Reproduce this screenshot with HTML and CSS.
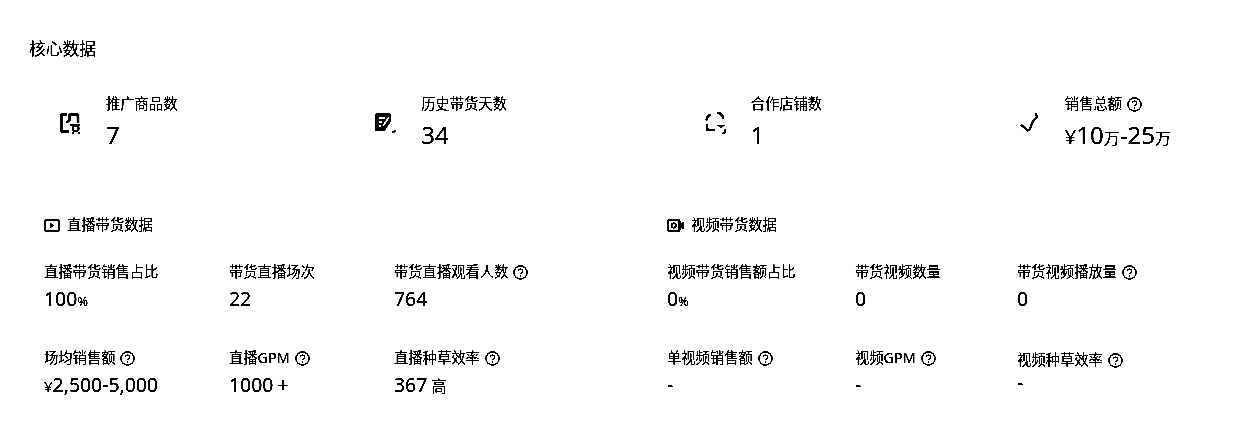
FILE: index.html
```html
<!DOCTYPE html>
<html lang="zh-CN">
<head>
<meta charset="utf-8">
<title>核心数据</title>
<link rel="stylesheet" href="styles.css">
</head>
<body>
<svg class="defs" width="0" height="0" aria-hidden="true">
  <defs>
    <filter id="bitone" x="0" y="0" width="100%" height="100%" color-interpolation-filters="sRGB">
      <feComponentTransfer>
        <feFuncR type="linear" slope="7" intercept="-4.1"/>
        <feFuncG type="linear" slope="7" intercept="-4.1"/>
        <feFuncB type="linear" slope="7" intercept="-4.1"/>
      </feComponentTransfer>
    </filter>
    <symbol id="help" viewBox="0 0 15 15">
      <circle cx="7.5" cy="7.5" r="6.6" fill="none" stroke="#000" stroke-width="1.2"/>
      <path d="M5.3 6C5.3 4.7 6.3 4 7.5 4s2.2.7 2.2 1.9c0 1.6-2.2 1.6-2.2 3.2" fill="none" stroke="#000" stroke-width="1.2"/>
      <rect x="6.8" y="10" width="1.4" height="1.4" fill="#000"/>
    </symbol>
  </defs>
</svg>
<main class="page">
  <h1 class="title">核心数据</h1>

  <section class="summary">
    <div class="stat">
      <svg class="stat-icon" viewBox="0 0 21 21" width="21" height="21">
        <path d="M7 1.5H2.5Q1.5 1.5 1.5 2.5V17.5Q1.5 18.5 2.5 18.5H9" fill="none" stroke="#000" stroke-width="2.6"/>
        <path d="M9.5 1.5H16Q18 1.5 18 3.5V10" fill="none" stroke="#000" stroke-width="2.6"/>
        <path d="M9.8 1V6.5L6.5 9.5" fill="none" stroke="#000" stroke-width="2.4"/>
        <circle cx="15.8" cy="15.5" r="2.8" fill="none" stroke="#000" stroke-width="1.8"/>
        <path d="M10 12H20M12 19.8H14M18 19.8H20" stroke="#000" stroke-width="1.2"/>
      </svg>
      <div class="stat-body">
        <div class="stat-label">推广商品数</div>
        <div class="stat-value">7</div>
      </div>
    </div>
    <div class="stat">
      <svg class="stat-icon" viewBox="0 0 21 20" width="21" height="20">
        <path d="M0.5 0.5H15.5V9L11 15.5 10 18H0.5Z" fill="#000"/>
        <path d="M4 5H10M4 9H7M4 13H6" stroke="#fff" stroke-width="1.8" fill="none"/>
        <path d="M14 4L8 13" stroke="#fff" stroke-width="2.2"/>
        <path d="M17.5 19.5L20.8 17.5" stroke="#000" stroke-width="1.8"/>
      </svg>
      <div class="stat-body">
        <div class="stat-label">历史带货天数</div>
        <div class="stat-value">34</div>
      </div>
    </div>
    <div class="stat">
      <svg class="stat-icon" viewBox="0 0 21 22" width="21" height="22">
        <path d="M1.5 8.5Q2 4 5.5 2.5M12 0.8Q17 1 18.5 6.5" fill="none" stroke="#000" stroke-width="2.2"/>
        <path d="M2 12V16.5Q2 18 3.5 18H10" fill="none" stroke="#000" stroke-width="2.4"/>
        <path d="M12 13H20L16 16.5Z" fill="#000"/>
        <path d="M20 17.5V20.5L17.5 21.5" fill="none" stroke="#000" stroke-width="1.6"/>
      </svg>
      <div class="stat-body">
        <div class="stat-label">合作店铺数</div>
        <div class="stat-value">1</div>
      </div>
    </div>
    <div class="stat">
      <svg class="stat-icon" viewBox="0 0 20 22" width="20" height="22">
        <path d="M0.8 12.5L7.5 18.5 10 17 12.5 10 15.5 6.5 17 4.5 15.5 1" fill="none" stroke="#000" stroke-width="2"/>
      </svg>
      <div class="stat-body">
        <div class="stat-label">销售总额 <svg class="help"><use href="#help"/></svg></div>
        <div class="stat-value"><span class="currency-lg">¥</span>10<span class="unit-lg">万</span>-25<span class="unit-lg">万</span></div>
      </div>
    </div>
  </section>

  <section class="channels">
    <div class="channel channel-live">
      <h2 class="channel-head">
        <svg class="channel-icon" viewBox="0 0 16 13" width="16" height="13">
          <rect x="1" y="1" width="14" height="11" rx="2" fill="none" stroke="#000" stroke-width="2"/>
          <path d="M6 3.8L10.5 6.5 6 9.2Z" fill="#000"/>
        </svg>
        直播带货数据
      </h2>
      <div class="metrics metrics-live">
        <div class="metric"><div class="metric-label">直播带货销售占比</div><div class="metric-value">100<span class="unit">%</span></div></div>
        <div class="metric"><div class="metric-label">带货直播场次</div><div class="metric-value">22</div></div>
        <div class="metric"><div class="metric-label">带货直播观看人数 <svg class="help"><use href="#help"/></svg></div><div class="metric-value">764</div></div>
        <div class="metric"><div class="metric-label">场均销售额 <svg class="help"><use href="#help"/></svg></div><div class="metric-value"><span class="currency">¥</span>2,500-5,000</div></div>
        <div class="metric"><div class="metric-label">直播GPM <svg class="help"><use href="#help"/></svg></div><div class="metric-value">1000<span class="suffix suffix-plus">+</span></div></div>
        <div class="metric"><div class="metric-label">直播种草效率 <svg class="help"><use href="#help"/></svg></div><div class="metric-value">367<span class="suffix">高</span></div></div>
      </div>
    </div>
    <div class="channel channel-video">
      <h2 class="channel-head">
        <svg class="channel-icon" viewBox="0 0 17 13" width="17" height="13">
          <rect x="1" y="1" width="11.5" height="11" rx="1.5" fill="none" stroke="#000" stroke-width="2"/>
          <circle cx="6.7" cy="6.5" r="2.2" fill="none" stroke="#000" stroke-width="1.6"/>
          <path d="M14 4L16.5 3V10L14 9Z" fill="#000"/>
        </svg>
        视频带货数据
      </h2>
      <div class="metrics metrics-video">
        <div class="metric"><div class="metric-label">视频带货销售额占比</div><div class="metric-value">0<span class="unit">%</span></div></div>
        <div class="metric"><div class="metric-label">带货视频数量</div><div class="metric-value">0</div></div>
        <div class="metric"><div class="metric-label">带货视频播放量 <svg class="help"><use href="#help"/></svg></div><div class="metric-value">0</div></div>
        <div class="metric"><div class="metric-label">单视频销售额 <svg class="help"><use href="#help"/></svg></div><div class="metric-value">-</div></div>
        <div class="metric"><div class="metric-label">视频GPM <svg class="help"><use href="#help"/></svg></div><div class="metric-value">-</div></div>
        <div class="metric metric-shifted"><div class="metric-label">视频种草效率 <svg class="help"><use href="#help"/></svg></div><div class="metric-value">-</div></div>
      </div>
    </div>
  </section>
</main>
</body>
</html>
```
FILE: styles.css
```css
* { box-sizing: border-box; }
html, body { margin: 0; background: #fff; }
body {
  width: 1245px;
  height: 425px;
  overflow: hidden;
  color: #000;
  font-family: "Noto Sans", "Noto Sans CJK SC", sans-serif;
  filter: url(#bitone);
}
.defs { position: absolute; }
.page { padding: 38px 74px 0 29px; }
.title { margin: 0; font-size: 16.8px; line-height: 22px; font-weight: 400; }

.summary {
  display: flex;
  justify-content: space-between;
  padding: 34px 0 0 31px;
}
.stat { display: flex; align-items: center; gap: 25px; }
.stat-icon { flex: none; }
.stat-body { display: flex; flex-direction: column; }
.stat-label { height: 20px; font-size: 14.3px; line-height: 20px; display: flex; align-items: center; gap: 5px; white-space: nowrap; }
.stat-value { height: 34px; font-size: 24px; line-height: 34px; margin-top: 4px; white-space: nowrap; }
.unit-lg { font-size: 16px; }
.currency-lg { font-size: 20px; }

.channels {
  display: grid;
  grid-template-columns: 623px 1fr;
  padding: 63px 0 0 15px;
}
.channel-head {
  margin: 0;
  display: flex;
  align-items: center;
  gap: 7px;
  font-size: 14.3px;
  line-height: 20px;
  font-weight: 400;
}
.channel-icon { flex: none; }
.metrics { display: grid; row-gap: 34px; margin-top: 27px; }
.metrics-live { grid-template-columns: 185px 165px 1fr; }
.metrics-video { grid-template-columns: 188px 162px 1fr; }
.metric-label { font-size: 14.3px; line-height: 20px; display: flex; align-items: center; gap: 5px; white-space: nowrap; }
.metric-value { font-size: 19.4px; line-height: 26px; margin-top: 4px; white-space: nowrap; }
.metric-shifted .metric-label { margin-top: 2px; }
.metric-shifted .metric-value { margin-top: 0; }
.unit { font-size: 13px; }
.currency { font-size: 15px; }
.suffix { font-size: 15.5px; margin-left: 4px; }
.suffix-plus { font-size: 19px; }
.help { width: 15px; height: 15px; flex: none; }
```
